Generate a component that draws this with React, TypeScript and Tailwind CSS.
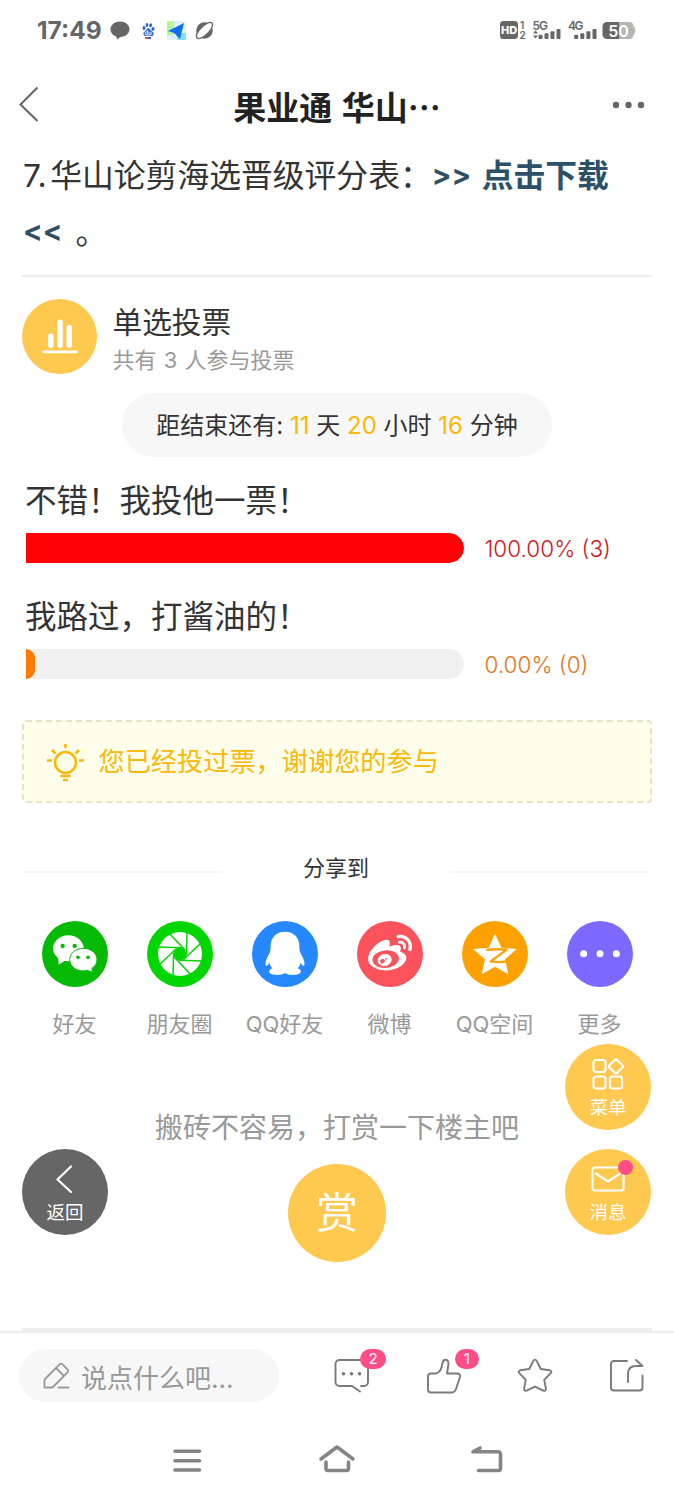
import React from 'react';
import { FaWeibo } from 'react-icons/fa';
import { SiBaidu } from 'react-icons/si';

interface ShareItem {
  label: string;
  bg: string;
  icon: React.ReactNode;
}

interface VoteOption {
  title: string;
  result: string;
  fill: string;
  width: string;
  color: string;
}

const WechatIcon = () => (
  <svg viewBox="0 0 198 198" className="w-full h-full">
    <g fill="#fff">
      <ellipse cx="79" cy="82" rx="46" ry="39" />
      <path d="M48 108 L50 131 L72 117 Z" />
    </g>
    <g fill="#fff" stroke="#04ba04" strokeWidth="3">
      <path d="M124 82c23 0 41 15 41 34 0 11-6 20-15 26l1 12-15-6c-4 1-8 2-12 2-23 0-41-15-41-34s18-34 41-34z" />
    </g>
    <g fill="#04ba04">
      <circle cx="62" cy="75" r="6.5" />
      <circle cx="98" cy="75" r="6.5" />
      <circle cx="108" cy="109" r="5.5" />
      <circle cx="138" cy="109" r="5.5" />
    </g>
  </svg>
);

const MomentsIcon = () => (
  <svg viewBox="-99 -99 198 198" className="w-full h-full">
    <circle r="66" fill="#fff" />
    <path d="M-18 -7.500 L-7.500 -18 L7.500 -18 L18 -7.500 L18 7.500 L7.500 18 L-7.500 18 L-18 7.500 Z" fill="#02d602" />
    {[0, 45, 90, 135, 180, 225, 270, 315].map((deg) => (
      <path key={deg} d="M-19 -4 L-21 68" stroke="#02d602" strokeWidth="4.500" transform={`rotate(${deg})`} />
    ))}
  </svg>
);

const QqIcon = () => (
  <svg viewBox="0 0 198 198" className="w-full h-full" fill="#fff">
    <path d="M99 32C73 32 56 50 56 73c0 6 0 9-1 15-1 8-5 12-9 21-7 14-7 26-2 25 4-1 7-7 9-8 1 7 4 12 8 16-8 3-10 7-9 12 2 9 37 11 47 2 10 9 45 7 47-2 1-5-1-9-9-12 4-4 7-9 8-16 2 1 5 7 9 8 5 1 5-11-2-25-4-9-8-13-9-21-1-6-1-9-1-15 0-23-17-41-43-41z" />
  </svg>
);

const QzoneIcon = () => (
  <svg viewBox="0 0 198 198" className="w-full h-full">
    <path d="M99 38l19 42 46 4-35 31 10 45-40-23-40 23 10-45-36-31 47-4z" fill="#fff" />
    <path d="M73 87c20-3 40-3 61-1l-48 35c16 3 32 3 48 0" fill="none" stroke="#fda101" strokeWidth="7" strokeLinejoin="round" />
  </svg>
);

const MoreIcon = () => (
  <svg viewBox="0 0 198 198" className="w-full h-full" fill="#fff">
    <circle cx="50" cy="98" r="10.5" />
    <circle cx="99" cy="98" r="10.5" />
    <circle cx="148" cy="98" r="10.5" />
  </svg>
);

const shareItems: ShareItem[] = [
  { label: '好友', bg: 'bg-[#04ba04]', icon: <WechatIcon /> },
  { label: '朋友圈', bg: 'bg-[#02d602]', icon: <MomentsIcon /> },
  { label: 'QQ好友', bg: 'bg-[#2688ff]', icon: <QqIcon /> },
  { label: '微博', bg: 'bg-[#fb525c]', icon: <FaWeibo className="w-11 h-11 text-white" /> },
  { label: 'QQ空间', bg: 'bg-[#fda101]', icon: <QzoneIcon /> },
  { label: '更多', bg: 'bg-[#7c69ff]', icon: <MoreIcon /> },
];

const options: VoteOption[] = [
  { title: '不错！我投他一票！', result: '100.00% (3)', fill: 'bg-[#ff0005]', width: '100%', color: 'text-[#cf1820]' },
  { title: '我路过，打酱油的！', result: '0.00% (0)', fill: 'bg-[#ff7a05]', width: '2.1%', color: 'text-[#e2751b]' },
];

const StatusBar = () => (
  <div className="flex items-center h-[60px] pl-[37px] pr-[37px] text-[#666]">
    <span className="w-[64px] text-[24.500px] leading-none font-bold">17:49</span>
    <svg className="ml-[9px]" width="20" height="20" viewBox="0 0 20 20" fill="#666">
      <path d="M10 1.5c5.3 0 9.5 3.4 9.5 7.8S15.300 17 10.500 17L7 19.500 6.300 16.500C3 15.500.5 12.700.5 9.300.5 4.900 4.700 1.500 10 1.500z" />
    </svg>
    <div className="flex flex-col items-center gap-px ml-[11px] mt-[2px] w-[14px]">
      <SiBaidu className="w-[13px] h-[13px] text-[#3367d6]" />
      <div className="flex w-[6px] h-[1.5px]">
        <i className="flex-1 bg-[#e05560]" />
        <i className="flex-1 bg-[#3367d6]" />
      </div>
    </div>
    <svg className="ml-[12px]" width="19" height="19" viewBox="0 0 19 19">
      <rect width="7" height="19" fill="#b5f59a" />
      <rect x="7" width="12" height="12" fill="#e3f1f8" />
      <rect y="14" width="10" height="5" fill="#dff0fa" />
      <rect x="10" y="12" width="9" height="7" fill="#7fe3ff" />
      <path d="M17 2 L1 10 L7 12 L13 18 Z" fill="#0f6df5" />
    </svg>
    <svg className="ml-[9px]" width="20" height="19" viewBox="0 0 20 19">
      <circle cx="9.500" cy="9.500" r="8.300" fill="#666" />
      <ellipse cx="9.500" cy="9.500" rx="10.500" ry="4.300" transform="rotate(-45 9.500 9.500)" fill="#fff" stroke="#666" strokeWidth="1.300" />
    </svg>
    <svg className="ml-auto" width="138" height="22" viewBox="0 0 138 22" fill="#666" fontFamily="Inter, sans-serif">
      <rect x="1" y="2" width="18" height="18" rx="3.500" />
      <text x="10" y="14.900" fill="#fff" fontSize="11" fontWeight="800" textAnchor="middle">HD</text>
      <text x="21" y="9.500" fontSize="10" fontWeight="600">1</text>
      <text x="20.500" y="20" fontSize="10" fontWeight="600">2</text>
      <text x="33.500" y="10.500" fontSize="12" fontWeight="600" textLength="15.500">5G</text>
      <path d="M36.500 11.500l2.500 3h-5zM36.500 19.500l2.500-3h-5z" />
      <rect x="39.500" y="15.700" width="4" height="4.300" rx="1" />
      <rect x="45.500" y="14.300" width="4" height="5.700" rx="1" />
      <rect x="51.500" y="12.300" width="4" height="7.700" rx="1" />
      <rect x="57.500" y="10" width="4" height="10" rx="1" />
      <text x="69" y="10.500" fontSize="12" fontWeight="600" textLength="15.500">4G</text>
      <rect x="75.200" y="15.700" width="4" height="4.300" rx="1" />
      <rect x="81.300" y="14.300" width="4" height="5.700" rx="1" />
      <rect x="87.400" y="12.300" width="4" height="7.700" rx="1" />
      <rect x="93.500" y="10" width="4" height="10" rx="1" />
      <path d="M119.500 3H130a4.500 4.500 0 0 1 4.500 4v.5c2.500 1 2.500 7 0 8v.5a4.500 4.500 0 0 1-4.500 4H119.500z" fill="#b5b5b5" />
      <path d="M120 3H108a4.500 4.500 0 0 0-4.500 4.500v8A4.500 4.500 0 0 0 108 20H120z" />
      <text x="119.500" y="17.500" fill="#fff" fontSize="16" fontWeight="600" textAnchor="middle">50</text>
    </svg>
  </div>
);

const Header = () => (
  <header className="flex items-center justify-between h-[87px] pl-[19px] pr-[26px]">
    <svg width="60" height="36" viewBox="0 0 60 36" fill="none" stroke="#666" strokeWidth="2">
      <path d="M18.500 1.500 L1.500 18.500 L18.500 35" />
    </svg>
    <h1 className="pt-[5px] pl-[7px] text-[33px] leading-none font-bold text-[#222] font-['Noto_Sans_CJK_SC',sans-serif] [word-spacing:2px]">
      果业通 华山⋯
    </h1>
    <svg className="mt-[2px]" width="60" height="10" viewBox="0 0 60 10" fill="#666">
      <circle cx="28" cy="5" r="3.200" />
      <circle cx="40.500" cy="5" r="3.200" />
      <circle cx="53" cy="5" r="3.200" />
    </svg>
  </header>
);

const VotePanel = () => (
  <section>
    <div className="flex mt-[22px] h-[75px]">
      <div className="w-[75px] h-[75px] rounded-full bg-[#ffc84e]">
        <svg viewBox="0 0 75 75" fill="#fff">
          <rect x="26" y="34.500" width="5.500" height="14.500" rx="2.700" />
          <rect x="35.300" y="20.500" width="5.500" height="28.500" rx="2.700" />
          <rect x="44.500" y="26" width="5.500" height="23" rx="2.700" />
          <rect x="20.500" y="51.500" width="35.500" height="2.800" rx="1.400" />
        </svg>
      </div>
      <div className="pt-px ml-[15.500px]">
        <div className="h-[44px] text-[29.700px] leading-[44px] text-[#333]">单选投票</div>
        <div className="h-8 text-[22px] leading-8 text-[#999] [word-spacing:1px]">共有 3 人参与投票</div>
      </div>
    </div>

    <div className="flex items-center justify-center mx-auto mt-[19px] pt-[2px] w-[430px] h-16 rounded-full bg-[#f7f7f7] text-[24px] text-[#333] whitespace-pre">
      距结束还有: <b className="font-normal text-[#fab80a]">11</b> 天 <b className="font-normal text-[#fab80a]">20</b> 小时 <b className="font-normal text-[#fab80a]">16</b> 分钟
    </div>

    <div className="flex flex-col gap-[30px] mt-5 pl-[3.500px]">
      {options.map((o) => (
        <div key={o.title}>
          <div className="h-[44px] text-[31.500px] leading-[47px] text-[#333] -ml-[0.500px]">{o.title}</div>
          <div className="flex items-center mt-3 h-[30px]">
            <div className="w-[438px] h-[30px] rounded-r-full bg-[#f0f0f0] overflow-hidden">
              <div className={`h-full rounded-r-[15px] ${o.fill}`} style={{ width: o.width }} />
            </div>
            <span className={`mt-[2px] ml-[21px] text-[22.500px] leading-none font-light ${o.color}`}>{o.result}</span>
          </div>
        </div>
      ))}
    </div>

    <div className="flex items-center mt-[41px] h-[83px] pl-[22px] rounded-[4px] border-2 border-dashed border-[#e8e2c4] bg-[#fffeeb] text-[26.200px] text-[#fab80a]">
      <svg width="40" height="40" viewBox="0 0 40 40" fill="none" stroke="#fab80a" strokeWidth="2.600" strokeLinecap="butt">
        <circle cx="19.500" cy="20.500" r="10.500" />
        <path d="M19.500 2v4M1 18.500h5M33 18.500h5M6 8l3.500 3.500M33 8l-3.500 3.500M14.500 34h10M17 38h5" />
      </svg>
      <span className="mt-px ml-[12.500px]">您已经投过票，谢谢您的参与</span>
    </div>
  </section>
);

const SharePanel = () => (
  <section>
    <div className="flex items-center justify-between mt-[49px] h-8">
      <i className="w-[201px] h-[2px] mt-[7px] bg-[#f7f7f7]" />
      <span className="text-[22px] leading-8 text-[#333]">分享到</span>
      <i className="w-[203px] h-[2px] mt-[7px] bg-[#f7f7f7]" />
    </div>
    <div className="grid grid-cols-6 mt-[37px]">
      {shareItems.map((item) => (
        <div key={item.label} className="flex flex-col items-center">
          <div className={`flex items-center justify-center w-[66px] h-[66px] rounded-full ${item.bg}`}>{item.icon}</div>
          <span className="mt-[21px] text-[22px] leading-8 text-[#999] whitespace-nowrap">{item.label}</span>
        </div>
      ))}
    </div>
  </section>
);

const FloatingButtons = () => (
  <>
    <button className="absolute left-[22px] top-[1149px] flex flex-col items-center w-[86px] h-[86px] pt-[15px] rounded-full bg-[#666] text-white text-[18.500px] leading-6">
      <svg width="20" height="30" viewBox="0 0 20 30" fill="none" stroke="#fff" strokeWidth="2.200" strokeLinecap="round" strokeLinejoin="round">
        <path d="M16 2.500 L2.500 15.500 L16 28" />
      </svg>
      <span className="mt-[6px]">返回</span>
    </button>
    <button className="absolute left-[565px] top-[1044px] flex flex-col items-center w-[86px] h-[86px] pt-[13px] rounded-full bg-[#ffc84e] text-white text-[18.500px] leading-6">
      <svg width="34" height="34" viewBox="0 0 34 34" fill="none" stroke="#fff" strokeWidth="2.200" strokeLinejoin="round">
        <rect x="2.500" y="3" width="12" height="12" rx="2.500" />
        <rect x="2.500" y="19.500" width="12" height="12" rx="2.500" />
        <rect x="19" y="19.500" width="12" height="12" rx="2.500" />
        <rect x="19.500" y="4" width="10.800" height="10.800" rx="2" transform="rotate(45 24.900 9.400)" />
      </svg>
      <span className="mt-[4px]">菜单</span>
    </button>
    <button className="absolute left-[565px] top-[1149px] flex flex-col items-center w-[86px] h-[86px] pt-[17px] rounded-full bg-[#ffc84e] text-white text-[18.500px] leading-6">
      <svg width="34" height="26" viewBox="0 0 34 26" fill="none" stroke="#fff" strokeWidth="2.200" strokeLinecap="round" strokeLinejoin="round">
        <rect x="1.500" y="1.500" width="31" height="23" rx="2.500" />
        <path d="M5 7.500 L17 15.500 L29 7.500" />
      </svg>
      <span className="mt-[8px]">消息</span>
      <i className="absolute left-[53px] top-[11px] w-[15px] h-[15px] rounded-full bg-[#ff4d88]" />
    </button>
  </>
);

const BottomBar = () => (
  <footer className="flex items-center h-[88px] pl-[19px] border-t-2 border-[#eee] bg-white">
    <div className="flex items-center w-[260px] h-[53px] pl-[24px] mb-[1px] rounded-full bg-[#f7f7f7] text-[26px] text-[#999]">
      <svg width="28" height="28" viewBox="0 0 28 28" fill="none" stroke="#999" strokeWidth="1.800" strokeLinecap="round" strokeLinejoin="round">
        <path d="M1.500 25.500V17.500L16.500 2.300Q18 1 19.500 2.300L24.500 7.300Q25.500 8.800 24.500 10.300L9.500 25.500Z M13.500 6.500l7.500 7.500M15.500 25.500h10" />
      </svg>
      <span className="ml-[10px] mt-[5px]">说点什么吧...</span>
    </div>
    <div className="flex ml-[27px] h-[36px]">
      <div className="relative flex justify-center w-[91.700px]">
        <svg width="36" height="36" viewBox="0 0 36 36" fill="none" stroke="#7a7a7a" strokeWidth="1.900" strokeLinecap="round" strokeLinejoin="round">
          <path d="M27 28h3a4 4 0 0 0 4-4V6a4 4 0 0 0-4-4H5.500a4 4 0 0 0-4 4V24a4 4 0 0 0 4 4H18l8 5.500" />
          <path d="M9.500 15.800h.02M17.500 15.800h.02M25.500 15.800h.02" strokeWidth="3.600" />
        </svg>
        <span className="absolute left-[54px] -top-[9px] w-[26px] h-5 rounded-full bg-[#ff4d88] text-center text-[15px] leading-5 text-white">2</span>
      </div>
      <div className="relative flex justify-center w-[91.700px]">
        <svg width="36" height="36" viewBox="0 0 36 36" fill="none" stroke="#7a7a7a" strokeWidth="1.900" strokeLinecap="round" strokeLinejoin="round">
          <path d="M5 15.500h4.500c5-1 6-5 7-10.500 1-4.500 6-4.500 6 1l-1.500 9.500H31c2.500 0 3.500 1.500 3 3.500l-4 12c-.8 2.500-2.500 3.500-5 3.500H5c-2 0-3-1-3-3V18.500c0-2 1-3 3-3z" />
        </svg>
        <span className="absolute left-[57px] -top-[9px] w-[24px] h-5 rounded-full bg-[#ff4d88] text-center text-[15px] leading-5 text-white">1</span>
      </div>
      <div className="flex justify-center w-[91.700px]">
        <svg width="36" height="36" viewBox="0 0 36 36" fill="none" stroke="#7a7a7a" strokeWidth="1.900" strokeLinejoin="round">
          <path d="M16.300 2.800q1.700-2.300 3.400 0l4.100 8.200 9 1.300q2.700.7.900 2.900l-6.500 6.600 1.700 8.800q.1 2.900-2.600 2l-8.300-4-8.300 4q-2.700.9-2.600-2l1.700-8.800-6.500-6.600q-1.800-2.200.9-2.900l9-1.300z" />
        </svg>
      </div>
      <div className="flex justify-center w-[91.700px]">
        <svg width="36" height="36" viewBox="0 0 36 36" fill="none" stroke="#7a7a7a" strokeWidth="1.900" strokeLinecap="round" strokeLinejoin="round">
          <path d="M18 3H5a3 3 0 0 0-3 3v23.500a3 3 0 0 0 3 3h25.500a3 3 0 0 0 3-3V17.500" />
          <path d="M19 24V16q0-8 8-8h6.500L27 2" />
        </svg>
      </div>
    </div>
  </footer>
);

const SystemNav = () => (
  <nav className="flex items-center justify-center gap-[113px] h-[81px]">
    <svg width="36" height="30" viewBox="0 0 36 30" stroke="#858585" strokeWidth="3.600" strokeLinecap="round">
      <path d="M6 6.300h24.500M6 15.800h24.500M6 25h24.500" />
    </svg>
    <svg width="38" height="32" viewBox="0 0 38 32" fill="none" stroke="#858585" strokeWidth="3.600" strokeLinecap="round" strokeLinejoin="round">
      <path d="M3 15 L19 3 L35 15" />
      <path d="M8 18v6.500a2 2 0 0 0 2 2h18.500a2 2 0 0 0 2-2V18" />
    </svg>
    <svg width="36" height="32" viewBox="0 0 36 32" fill="none" stroke="#858585" strokeWidth="3.600" strokeLinecap="round" strokeLinejoin="round">
      <path d="M11 4 L4 7.800 H29a2.500 2.500 0 0 1 2.500 2.500V24.500a2 2 0 0 1-2 2H9.500" />
    </svg>
  </nav>
);

export default function App() {
  return (
    <div className="relative w-[674px] h-[1500px] overflow-hidden bg-white font-['Inter','Noto_Sans_CJK_SC',sans-serif]">
      <StatusBar />
      <Header />
      <main className="px-[22px]">
        <p className="h-[112px] pt-px pl-px text-[31.800px] leading-[56px] text-[#333]">
          <span className="mr-[3px] tracking-[0.500px]">7.</span>华山论剪海选晋级评分表：
          <a className="font-bold text-[#2c5068] [word-spacing:3px]">
            <span className="relative -top-[2px] text-[29px]">&gt;&gt;</span> 点击下载
            <br />
            <span className="relative -top-[3px] text-[29px]">&lt;&lt;</span>
          </a>
          <span className="ml-[13px]">。</span>
        </p>
        <div className="mt-4 h-[2px] bg-[#eee]" />
        <VotePanel />
        <SharePanel />
        <div className="flex flex-col items-center mt-[67px]">
          <p className="h-10 text-[28px] leading-[42px] text-[#999]">搬砖不容易，打赏一下楼主吧</p>
          <button className="mt-[17px] w-[98px] h-[98px] rounded-full bg-[#ffc84e] text-[42px] leading-[98px] text-white">赏</button>
        </div>
        <div className="mt-[66px] h-[3px] bg-[#eee]" />
      </main>
      <BottomBar />
      <SystemNav />
      <FloatingButtons />
    </div>
  );
}
